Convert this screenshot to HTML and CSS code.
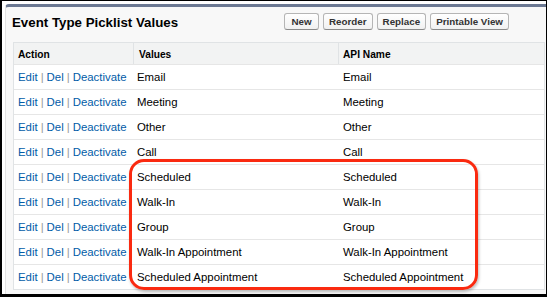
FILE: index.html
```html
<!DOCTYPE html>
<html>
<head>
<meta charset="utf-8">
<link rel="stylesheet" href="styles.css">
</head>
<body>
<div class="frame">
  <div class="panel">
    <div class="pb-header">
      <h2 class="title">Event Type Picklist Values</h2>
      <div class="buttons">
        <button class="btn btn-new">New</button>
        <button class="btn">Reorder</button>
        <button class="btn">Replace</button>
        <button class="btn">Printable View</button>
      </div>
    </div>
    <div class="list">
      <div class="row head">
        <div class="cell c1">Action</div>
        <div class="cell c2">Values</div>
        <div class="cell c3">API Name</div>
      </div>
      <div class="row"><div class="cell c1"><a>Edit</a><span class="sep">|</span><a>Del</a><span class="sep">|</span><a>Deactivate</a></div><div class="cell c2">Email</div><div class="cell c3">Email</div></div>
      <div class="row"><div class="cell c1"><a>Edit</a><span class="sep">|</span><a>Del</a><span class="sep">|</span><a>Deactivate</a></div><div class="cell c2">Meeting</div><div class="cell c3">Meeting</div></div>
      <div class="row"><div class="cell c1"><a>Edit</a><span class="sep">|</span><a>Del</a><span class="sep">|</span><a>Deactivate</a></div><div class="cell c2">Other</div><div class="cell c3">Other</div></div>
      <div class="row"><div class="cell c1"><a>Edit</a><span class="sep">|</span><a>Del</a><span class="sep">|</span><a>Deactivate</a></div><div class="cell c2">Call</div><div class="cell c3">Call</div></div>
      <div class="row"><div class="cell c1"><a>Edit</a><span class="sep">|</span><a>Del</a><span class="sep">|</span><a>Deactivate</a></div><div class="cell c2">Scheduled</div><div class="cell c3">Scheduled</div></div>
      <div class="row"><div class="cell c1"><a>Edit</a><span class="sep">|</span><a>Del</a><span class="sep">|</span><a>Deactivate</a></div><div class="cell c2">Walk-In</div><div class="cell c3">Walk-In</div></div>
      <div class="row"><div class="cell c1"><a>Edit</a><span class="sep">|</span><a>Del</a><span class="sep">|</span><a>Deactivate</a></div><div class="cell c2">Group</div><div class="cell c3">Group</div></div>
      <div class="row"><div class="cell c1"><a>Edit</a><span class="sep">|</span><a>Del</a><span class="sep">|</span><a>Deactivate</a></div><div class="cell c2">Walk-In Appointment</div><div class="cell c3">Walk-In Appointment</div></div>
      <div class="row"><div class="cell c1"><a>Edit</a><span class="sep">|</span><a>Del</a><span class="sep">|</span><a>Deactivate</a></div><div class="cell c2">Scheduled Appointment</div><div class="cell c3">Scheduled Appointment</div></div>
    </div>
  </div>
  <div class="highlight"></div>
</div>
</body>
</html>
```

FILE: styles.css
```css
* { box-sizing: border-box; }
html, body { margin: 0; padding: 0; }
body {
  font-family: "Liberation Sans", Arial, Helvetica, sans-serif;
  color: #000;
  background: #000;
}
.frame {
  position: relative;
  width: 547px;
  height: 297px;
  overflow: hidden;
  background: #fff;
  border-style: solid;
  border-color: #000;
  border-width: 1px 1px 3px 2px;
  padding: 3px 0 0 3px;
}
.panel {
  width: 560px;
  height: 300px;
  background: #f8f8f8;
  border-top: 3px solid #6b7892;
  border-left: 1px solid #e2e2e2;
  border-radius: 4px 0 0 0;
  padding: 0 0 0 7px;
}
.pb-header {
  display: flex;
  align-items: center;
  height: 35px;
  padding-top: 1px;
}
.title {
  margin: -5px 0 0 -1px;
  font-size: 13.3px;
  font-weight: bold;
  color: #000;
  width: 272px;
}
.buttons {
  display: flex;
  gap: 4px;
  margin-top: -7px;
}
.btn {
  font-family: "Liberation Sans", Arial, Helvetica, sans-serif;
  font-size: 9.8px;
  font-weight: bold;
  color: #333;
  height: 17px;
  padding: 0 5px;
  border: 1px solid #b5b5b5;
  border-bottom-color: #8a8a8a;
  border-radius: 3px;
  background: linear-gradient(#ffffff, #f1f1f1);
  line-height: 15px;
}
.btn-new { min-width: 35px; }
.list {
  width: 532px;
  border: 1px solid #e0e3e5;
  background: #fff;
}
.row {
  display: grid;
  grid-template-columns: 120px 205px 1fr;
  height: 25px;
  border-top: 1px solid #e6e6e6;
  align-items: center;
  font-size: 11.4px;
}
.row.head {
  height: 21px;
  border-top: none;
  background: #f2f3f3;
  font-weight: bold;
  font-size: 10.2px;
  align-items: stretch;
}
.head .cell {
  display: flex;
  align-items: center;
  padding-top: 1px;
  border-right: 1px solid #e0e3e5;
}
.head .c1 { padding-left: 4px; }
.head .c2 { padding-left: 5px; }
.head .c3 { padding-left: 4px; border-right: none; }
.cell { white-space: nowrap; }
.c1 { padding-left: 4px; }
.c2 { padding-left: 3px; }
.c3 { padding-left: 4px; }
a { color: #015ba7; text-decoration: none; }
.sep { color: #999; margin: 0 3px; }
.highlight {
  position: absolute;
  left: 127px;
  top: 158px;
  width: 349px;
  height: 131px;
  border: 3px solid #fa2a10;
  border-radius: 15px;
  box-shadow: 1px 2px 3px rgba(0,0,0,0.25);
}
```
